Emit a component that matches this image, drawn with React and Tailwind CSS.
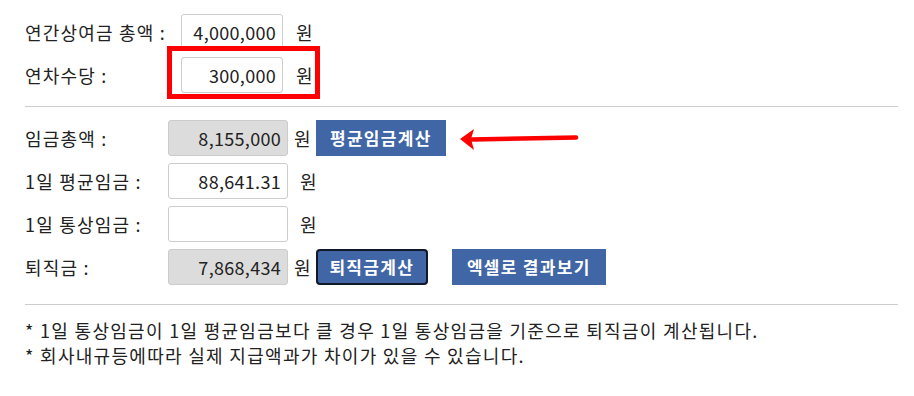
import React from "react";

const Input = ({ value, gray, width = "w-[120px]" }) => (
	<input
		type="text"
		readOnly
		value={value}
		className={`${width} h-[36px] rounded-[3px] border border-[#cccccc] px-[6px] text-right text-[18px] tracking-[0.3px] text-[#222] outline-none ${
			gray ? "bg-[#dcdcdc]" : "bg-white"
		}`}
	/>
);

const Btn = ({ children, className = "" }) => (
	<button
		className={`h-[36px] bg-[#4166a6] px-[8px] text-[17px] font-bold tracking-[1.3px] text-white ${className}`}
	>
		{children}
	</button>
);

const Arrow = () => (
	<svg width="120" height="24" viewBox="0 0 120 24" className="ml-[14px]">
		<path d="M12 13.5 L116 11.5" stroke="#ff0000" strokeWidth="4.5" strokeLinecap="round" />
		<path d="M0 13 L14 3 L11 13 L14 24 Z" fill="#ff0000" />
	</svg>
);

const App = () => {
	return (
		<div
			className="min-h-[396px] w-[914px] bg-white pl-[25px] pr-[16px] pt-[14px] text-[18px] text-[#222]"
			style={{ fontFamily: '"Noto Sans CJK KR", "Noto Sans", sans-serif' }}
		>
			{/* 상여금 / 연차수당 */}
			<div className="flex flex-col gap-[7px] pb-[13px] tracking-[1.2px]">
				<div className="flex items-center">
					<span className="w-[156px]">연간상여금 총액 :</span>
					<Input value="4,000,000" width="w-[102px]" />
					<span className="ml-[13px]">원</span>
				</div>
				<div className="relative flex items-center">
					<span className="w-[156px]">연차수당 :</span>
					<Input value="300,000" width="w-[102px]" />
					<span className="ml-[13px]">원</span>
					<div className="absolute left-[142px] top-[-11px] h-[53px] w-[153px] border-[5px] border-[#ff0000]" />
				</div>
			</div>

			<div className="border-t border-[#cccccc]" />

			<div className="flex flex-col gap-[7px] pt-[13px] pb-[19px] tracking-[1.2px]">
				<div className="flex items-center">
					<span className="w-[143px]">임금총액 :</span>
					<Input value="8,155,000" gray />
					<span className="ml-[6px]">원</span>
					<Btn className="ml-[4px] w-[130px]">평균임금계산</Btn>
					<Arrow />
				</div>
				<div className="flex items-center">
					<span className="w-[143px]">1일 평균임금 :</span>
					<Input value="88,641.31" />
					<span className="ml-[12px]">원</span>
				</div>
				<div className="flex items-center">
					<span className="w-[143px]">1일 통상임금 :</span>
					<Input value="" />
					<span className="ml-[12px]">원</span>
				</div>
				<div className="flex items-center">
					<span className="w-[143px]">퇴직금 :</span>
					<Input value="7,868,434" gray />
					<span className="ml-[6px]">원</span>
					<Btn className="ml-[4px] w-[112px] rounded-[4px] border-2 border-[#111827]">퇴직금계산</Btn>
					<Btn className="ml-[24px] w-[154px]">엑셀로 결과보기</Btn>
				</div>
			</div>

			<div className="border-t border-[#cccccc]" />

			<div className="pt-[13px] leading-[25px] tracking-[1.3px]">
				<p>* 1일 통상임금이 1일 평균임금보다 클 경우 1일 통상임금을 기준으로 퇴직금이 계산됩니다.</p>
				<p>* 회사내규등에따라 실제 지급액과가 차이가 있을 수 있습니다.</p>
			</div>
		</div>
	);
};

export default App;
